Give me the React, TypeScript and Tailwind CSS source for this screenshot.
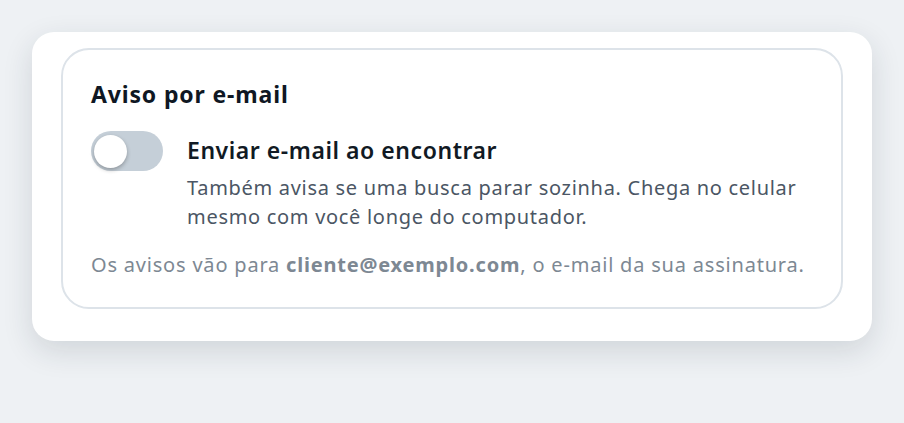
import { useState } from "react";

export default function App() {
  const [enabled, setEnabled] = useState(false);

  return (
    <div
      className="min-h-screen bg-[#eef1f4] p-8"
      style={{ fontFamily: '"Noto Sans", "Open Sans", sans-serif' }}
    >
      <div className="rounded-[22px] bg-white px-[29px] pt-4 pb-8 shadow-[0_10px_30px_rgba(30,41,59,0.14)]">
        <div className="rounded-[28px] border-2 border-[#dde3e9] p-7">
          <h2 className="text-[23px] font-bold leading-8 tracking-[0.85px] text-[#0f1723]">
            Aviso por e-mail
          </h2>

          <div className="mt-[21px] flex items-start gap-6">
            {/* Switch */}
            <button
              onClick={() => setEnabled(!enabled)}
              className={`flex h-10 w-[72px] shrink-0 items-center rounded-full px-[3px] transition-colors ${
                enabled ? "justify-end bg-[#2563eb]" : "justify-start bg-[#c5cfd8]"
              }`}
            >
              <span className="h-[33px] w-[33px] rounded-full bg-white shadow-[0_2px_4px_rgba(0,0,0,0.28)]" />
            </button>

            <div className="pt-1">
              <div className="text-[23px] font-semibold leading-[30px] tracking-[0.55px] text-[#111a24]">
                Enviar e-mail ao encontrar
              </div>
              <p className="mt-2 text-[20px] leading-[29px] tracking-[0.7px] text-[#4b5664]">
                Também avisa se uma busca parar sozinha. Chega no celular
                <br />
                mesmo com você longe do computador.
              </p>
            </div>
          </div>

          <p className="mt-5 whitespace-nowrap text-[20px] leading-7 tracking-[0.8px] text-[#7d8893]">
            Os avisos vão para{" "}
            <span className="font-bold">cliente@exemplo.com</span>, o e-mail da
            sua assinatura.
          </p>
        </div>
      </div>
    </div>
  );
}
